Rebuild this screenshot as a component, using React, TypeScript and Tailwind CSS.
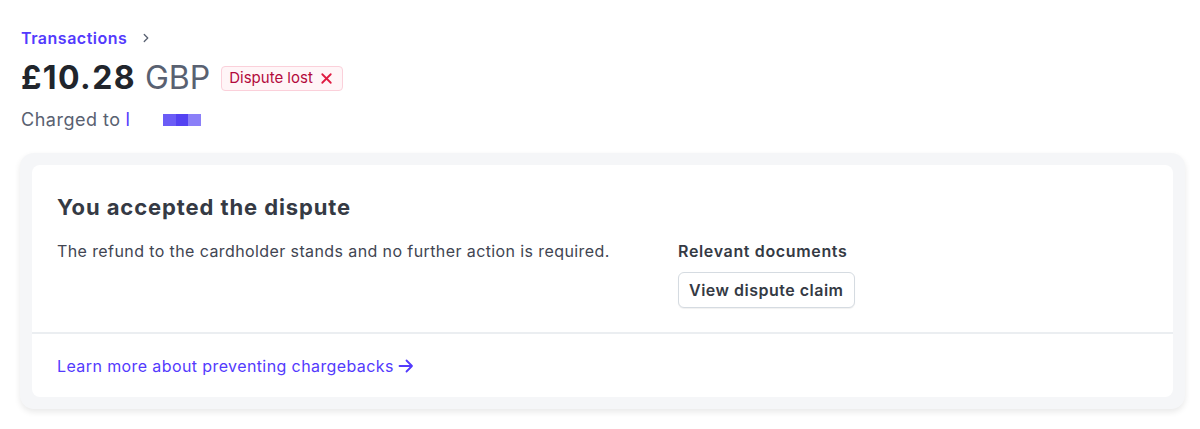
import { ChevronRight, X } from 'lucide-react'

export default function App() {
  return (
    <div
      className="min-h-screen bg-white pt-[26px] pl-[20px] pr-[15px]"
      style={{ fontFamily: 'Inter, "Noto Sans", sans-serif' }}
    >
      {/* Header */}
      <div className="flex items-center gap-[12px] pl-[1px] leading-6">
        <a className="text-[16px] font-semibold tracking-[0.5px] text-[#533afd]">Transactions</a>
        <ChevronRight size={14} strokeWidth={2.25} className="text-[#596171]" />
      </div>

      <div className="mt-[8px] flex items-center gap-[11px] pl-[1px]">
        <div className="text-[32px] leading-[40px] text-[#353a44]">
          <span className="font-bold tracking-[1.4px] text-[#21252c]">£10.28</span>{' '}
          <span className="text-[#596171]">GBP</span>
        </div>
        <span className="flex h-[25px] items-center gap-[5px] rounded-[4px] border border-[#fbd0da] bg-[#fff5f7] px-[7px] text-[15px] text-[#b3093c]">
          Dispute lost
          <X size={17} strokeWidth={2.5} className="text-[#df1b41]" />
        </span>
      </div>

      <div className="mt-[8px] flex items-center pl-[1px] text-[18px] leading-[28px] tracking-[0.5px] text-[#596171]">
        <span>Charged to</span>
        <span className="ml-[5px] text-[#533afd]">l</span>
        <span className="ml-[33px] flex h-[12px]">
          <span className="w-[13px] bg-[#6b5cf6]" />
          <span className="w-[12px] bg-[#5442f2]" />
          <span className="w-[13px] bg-[#8b7ff8]" />
        </span>
      </div>

      {/* Card */}
      <div className="mt-[19px] rounded-[14px] bg-[#f5f6f8] p-[12px] shadow-[0_3px_6px_rgba(0,0,0,0.09)]">
        <div className="rounded-[8px] bg-white">
          <div className="px-[25px] pt-[28px] pb-[24px]">
            <h2 className="text-[22px] font-bold leading-[28px] tracking-[0.9px] text-[#353a44]">
              You accepted the dispute
            </h2>
            <div className="mt-[18px] flex">
              <p className="w-[621px] text-[16px] leading-6 tracking-[0.4px] text-[#414552]">
                The refund to the cardholder stands and no further action is required.
              </p>
              <div className="flex flex-col items-start">
                <span className="text-[16px] font-semibold leading-6 tracking-[0.65px] text-[#353a44]">
                  Relevant documents
                </span>
                <button className="mt-[9px] h-[36px] rounded-[6px] border border-[#d5dbe1] bg-white px-[10px] text-[16px] font-semibold tracking-[0.5px] text-[#353a44] shadow-[0_1px_1px_rgba(0,0,0,0.06)]">
                  View dispute claim
                </button>
              </div>
            </div>
          </div>
          <div className="border-t-2 border-[#ebeef1] px-[25px] pt-[22px] pb-[21px]">
            <a className="flex items-center gap-[4px] text-[16px] leading-5 tracking-[0.4px] text-[#533afd]">
              Learn more about preventing chargebacks
              <svg width="16" height="14" viewBox="0 0 16 14" fill="none" stroke="currentColor" strokeWidth="1.8" strokeLinecap="round" strokeLinejoin="round">
                <path d="M1.5 7h12.5M8.5 1.5 14 7l-5.5 5.5" />
              </svg>
            </a>
          </div>
        </div>
      </div>
    </div>
  )
}
